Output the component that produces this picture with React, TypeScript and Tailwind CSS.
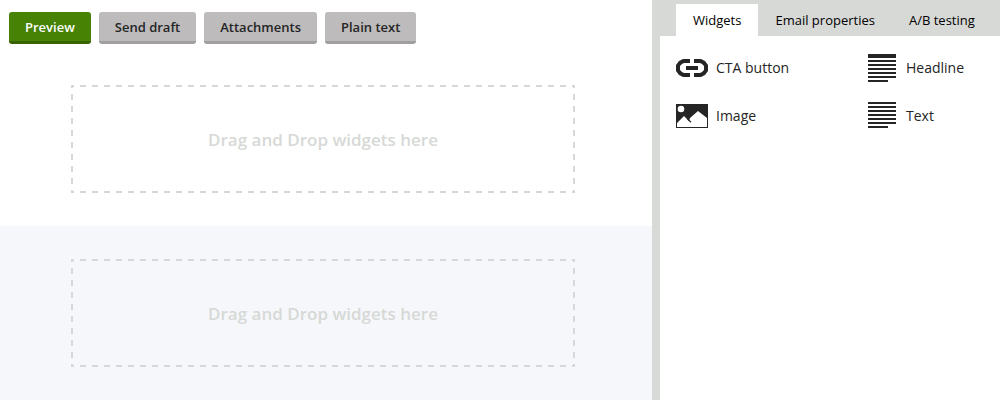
import React from 'react';

const LinkIcon = () => (
  <svg width="32" height="18" viewBox="0 0 32 18" fill="#252525" aria-hidden="true">
    <path d="M14 0H7L3 2 0 6v6l3 4 4 2h7v-4H8L6 13 4 11V7l2-2 2-1h6zM18 0h7l4 2 3 4v6l-3 4-4 2h-7v-4h6l2-1 2-2V7l-2-2-2-1h-6z" />
    <path d="M10 7h12v4H10z" />
  </svg>
);

const ImageIcon = () => (
  <svg width="32" height="24" viewBox="0 0 32 24" aria-hidden="true">
    <path fill="#252525" d="M0 0h32v24H0z" />
    <circle cx="5" cy="5" r="3.300" fill="#fff" />
    <path fill="#fff" d="M1 19l7-7 5 5 1-3 8-7 9 7v9H1z" />
    <path fill="none" stroke="#252525" strokeWidth="1.300" d="M11.500 15l3.500 3.200" />
  </svg>
);

const HeadlineIcon = () => (
  <svg width="28" height="28" viewBox="0 0 28 28" fill="#252525" aria-hidden="true">
    <path d="M0 0h28v4H0zM0 6h28v2H0zM0 10h28v2H0zM0 14h28v2H0zM0 18h28v2H0zM0 22h28v2H0zM0 26h20v2H0z" />
  </svg>
);

const TextIcon = () => (
  <svg width="28" height="28" viewBox="0 0 28 28" fill="#252525" aria-hidden="true">
    <path d="M0 0h28v2H0zM0 4h28v2H0zM0 8h28v2H0zM0 12h28v2H0zM0 16h28v2H0zM0 20h28v2H0zM0 24h20v2H0z" />
  </svg>
);

const widgets = [
  { label: 'CTA button', icon: <LinkIcon />, gap: 'gap-2' },
  { label: 'Headline', icon: <HeadlineIcon />, gap: 'gap-2.5' },
  { label: 'Image', icon: <ImageIcon />, gap: 'gap-2' },
  { label: 'Text', icon: <TextIcon />, gap: 'gap-2.5' },
];

const tabs = ['Widgets', 'Email properties', 'A/B testing'];

// 6px dashes with 6px gaps along all four edges.
const dashedFrame =
  'bg-[image:linear-gradient(90deg,#d7d7d7_50%,transparent_50%),linear-gradient(90deg,#d7d7d7_50%,transparent_50%),linear-gradient(180deg,#d7d7d7_50%,transparent_50%),linear-gradient(180deg,#d7d7d7_50%,transparent_50%)] [background-size:12px_2px,12px_2px,2px_12px,2px_12px] [background-position:-3px_0,-3px_100%,0_-3px,100%_-3px] [background-repeat:repeat-x,repeat-x,repeat-y,repeat-y]';

const DropZone = ({ tone }: { tone: string }) => (
  <section className={`py-[33px] pr-1.5 ${tone}`}>
    <div
      className={`mx-auto flex h-[108px] max-w-[504px] items-center justify-center pt-0.5 text-[17px] font-semibold text-[#d7d9d6] ${dashedFrame}`}
    >
      Drag and Drop widgets here
    </div>
  </section>
);

export default function App() {
  return (
    <div className="flex min-h-screen bg-white font-['Open_Sans','Noto_Sans',sans-serif] text-sm text-[#252525]">
      <main className="min-w-0 flex-1">
        <div className="flex gap-2 px-[9px] pt-3 pb-2">
          <button className="h-8 rounded-[3px] border-b-3 border-[#376300] bg-[#478204] px-4 pt-0.5 text-[13px] font-semibold text-white">
            Preview
          </button>
          {['Send draft', 'Attachments', 'Plain text'].map((label) => (
            <button
              key={label}
              className="h-8 rounded-[3px] border-b-3 border-[#a09e9f] bg-[#bdbbbc] px-4 pt-0.5 text-[13px] font-semibold"
            >
              {label}
            </button>
          ))}
        </div>
        <DropZone tone="bg-white" />
        <DropZone tone="bg-[#f5f7fb]" />
      </main>
      <aside className="w-[348px] shrink-0 border-l-8 border-[#d7d9d6]">
        <div role="tablist" className="flex bg-[#d7d9d6] pt-1 pl-4">
          {tabs.map((tab, i) => (
            <button
              key={tab}
              role="tab"
              aria-selected={i === 0}
              className={`h-8 px-[17px] text-[13px] whitespace-nowrap text-black ${i === 0 ? 'bg-white' : ''}`}
            >
              {tab}
            </button>
          ))}
        </div>
        <ul className="grid grid-cols-[192px_1fr] pt-2 pl-4">
          {widgets.map(({ label, icon, gap }) => (
            <li key={label} className={`flex h-12 items-center ${gap}`}>
              {icon}
              <span>{label}</span>
            </li>
          ))}
        </ul>
      </aside>
    </div>
  );
}
